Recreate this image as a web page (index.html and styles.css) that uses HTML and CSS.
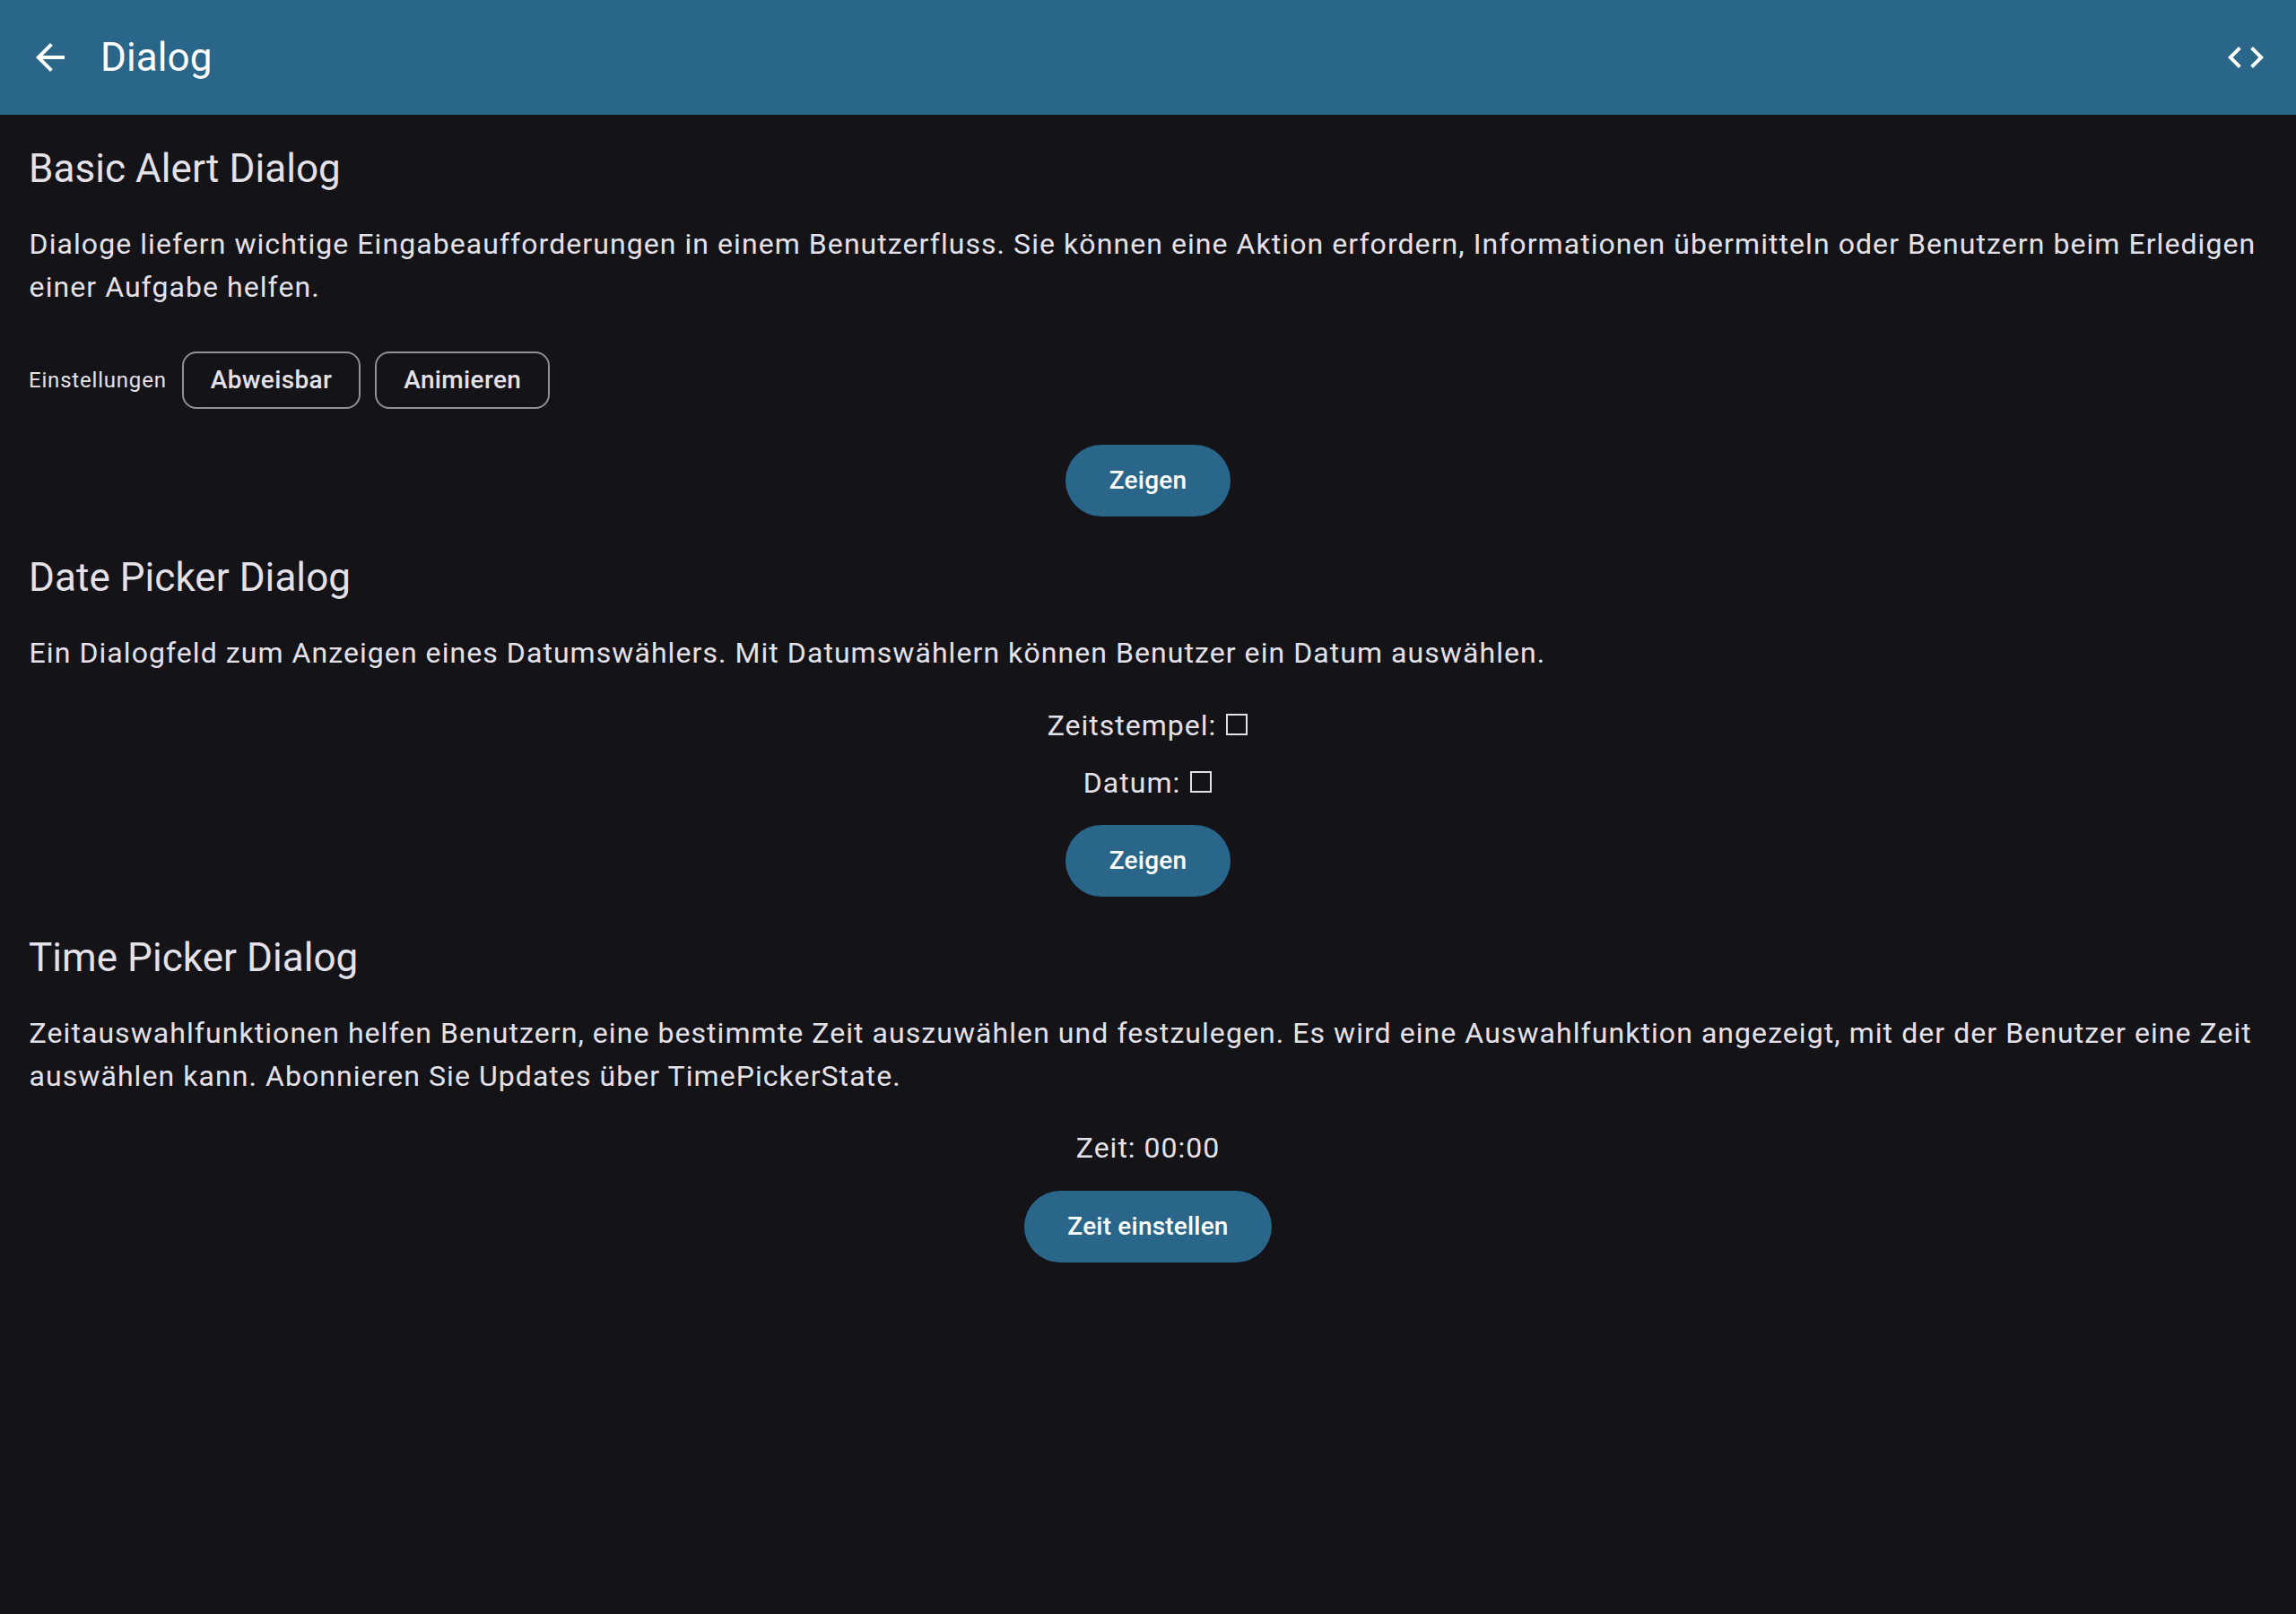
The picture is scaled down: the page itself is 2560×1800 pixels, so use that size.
FILE: index.html
```html
<!DOCTYPE html>
<html lang="de">
<head>
<meta charset="utf-8">
<title>Dialog</title>
<link rel="stylesheet" href="styles.css">
</head>
<body>
<header class="app-bar">
  <svg class="icon" viewBox="0 0 24 24"><path d="M20 11H7.83l5.59-5.59L12 4l-8 8 8 8 1.41-1.41L7.83 13H20v-2z"/></svg>
  <h1 class="app-title">Dialog</h1>
  <svg class="icon" viewBox="0 0 24 24"><path d="M9.4 16.6 4.8 12l4.6-4.6L8 6l-6 6 6 6 1.4-1.4zm5.2 0 4.6-4.6-4.6-4.6L16 6l6 6-6 6-1.4-1.4z"/></svg>
</header>
<main class="content">
  <section class="section">
    <h2 class="heading">Basic Alert Dialog</h2>
    <p class="body">Dialoge liefern wichtige Eingabeaufforderungen in einem Benutzerfluss. Sie können eine Aktion erfordern, Informationen übermitteln oder Benutzern beim Erledigen einer Aufgabe helfen.</p>
    <div class="settings">
      <span class="settings-label">Einstellungen</span>
      <button class="chip">Abweisbar</button>
      <button class="chip">Animieren</button>
    </div>
    <button class="button">Zeigen</button>
  </section>
  <section class="section">
    <h2 class="heading">Date Picker Dialog</h2>
    <p class="body">Ein Dialogfeld zum Anzeigen eines Datumswählers. Mit Datumswählern können Benutzer ein Datum auswählen.</p>
    <div class="values values-dates">
      <p class="value">Zeitstempel: <span class="empty-box"></span></p>
      <p class="value">Datum: <span class="empty-box"></span></p>
    </div>
    <button class="button">Zeigen</button>
  </section>
  <section class="section">
    <h2 class="heading">Time Picker Dialog</h2>
    <p class="body">Zeitauswahlfunktionen helfen Benutzern, eine bestimmte Zeit auszuwählen und festzulegen. Es wird eine Auswahlfunktion angezeigt, mit der der Benutzer eine Zeit auswählen kann. Abonnieren Sie Updates über TimePickerState.</p>
    <div class="values">
      <p class="value">Zeit: 00:00</p>
    </div>
    <button class="button">Zeit einstellen</button>
  </section>
</main>
</body>
</html>
```
FILE: styles.css
```css
* {
  box-sizing: border-box;
  margin: 0;
}

body {
  min-height: 100vh;
  background: #141318;
  color: #e5e1e9;
  font-family: Roboto, "Liberation Sans", sans-serif;
}

.app-bar {
  display: flex;
  align-items: center;
  height: 128px;
  padding: 0 32px;
  background: #296689;
  color: #fff;
}

.icon {
  width: 48px;
  height: 48px;
  fill: currentColor;
}

.app-title {
  flex: 1;
  padding-left: 32px;
  font-size: 44px;
  line-height: 56px;
  font-weight: 400;
  letter-spacing: 0.1px;
}

.content {
  display: flex;
  flex-direction: column;
  gap: 40px;
  padding: 32px;
}

.section {
  display: flex;
  flex-direction: column;
}

.heading {
  margin-bottom: 32px;
  font-size: 44px;
  line-height: 56px;
  font-weight: 400;
  letter-spacing: 0.06px;
}

.body,
.value {
  font-size: 32px;
  line-height: 48px;
  letter-spacing: 1px;
}

.body {
  padding-left: 0.6px;
  letter-spacing: 1.064px;
}

.settings {
  display: flex;
  align-items: center;
  gap: 16px;
  margin: 48px 0 16px;
}

.settings-label {
  margin-right: 1px;
  font-size: 24px;
  line-height: 32px;
  letter-spacing: 0.8px;
}

.chip {
  height: 64px;
  padding: 0 30px;
  border: 2px solid #928f99;
  border-radius: 16px;
  background: none;
  color: inherit;
  font: 500 28px/40px Roboto, "Liberation Sans", sans-serif;
  letter-spacing: 0.35px;
}

.values {
  display: flex;
  flex-direction: column;
  align-items: center;
  gap: 16px;
  margin-top: 32px;
}

.values-dates {
  margin: 33px 0 -1px;
  padding-left: 1px;
}

.empty-box {
  display: inline-block;
  width: 24px;
  height: 24px;
  margin: 0 2px;
  border: 2px solid currentColor;
  vertical-align: baseline;
}

.button {
  align-self: center;
  min-width: 184px;
  height: 80px;
  margin-top: 24px;
  padding: 0 48px;
  border: 0;
  border-radius: 40px;
  background: #296689;
  color: #fff;
  font: 500 28px/40px Roboto, "Liberation Sans", sans-serif;
  letter-spacing: 0.2px;
}
```
